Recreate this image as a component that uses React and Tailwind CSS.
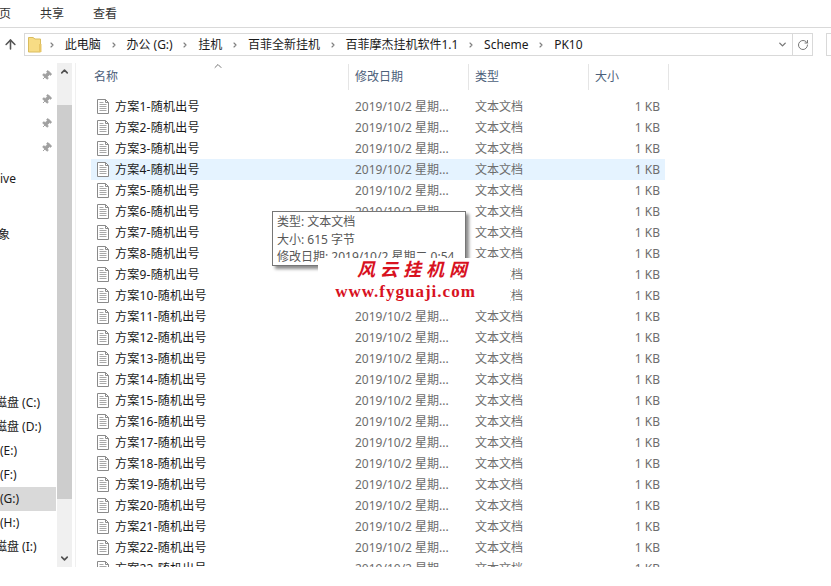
import React from "react";
import { ArrowUp, ChevronDown, ChevronUp, ChevronRight, RotateCw, Pin } from "lucide-react";

const FONT = "font-['Noto_Sans','Noto_Sans_CJK_SC',sans-serif]";

const crumbs = ["此电脑", "办公 (G:)", "挂机", "百菲全新挂机", "百菲摩杰挂机软件1.1", "Scheme", "PK10"];

const files = Array.from({ length: 23 }, (_, i) => `方案${i + 1}-随机出号`);

const drives = [
  { label: "磁盘 (C:)", cut: true },
  { label: "磁盘 (D:)", cut: true },
  { label: "(E:)" },
  { label: "(F:)" },
  { label: "(G:)", active: true },
  { label: "(H:)" },
  { label: "磁盘 (I:)", cut: true },
];

function FileIcon() {
  return (
    <svg width="12" height="15" viewBox="0 0 12 15" fill="none" className="shrink-0">
      <path d="M0.5 0.5H8.5L11.5 3.5V14.5H0.5Z" fill="#fff" stroke="#8a8a8a" />
      <path d="M8.5 0.5V3.5H11.5" stroke="#8a8a8a" />
      <path d="M2.5 3.5H6.5M2.5 5.5H9.5M2.5 7.5H9.5M2.5 9.5H9.5M2.5 11.5H9.5" stroke="#a8a8a8" />
    </svg>
  );
}

function PinRow() {
  return (
    <div className="h-[24px] flex items-center justify-end pr-[4px]">
      <Pin size={11} className="text-[#a0a0a0] rotate-45" fill="#a0a0a0" />
    </div>
  );
}

function HeaderCell({ label, width, pad }) {
  return (
    <div className={`${width} ${pad} h-[26px] flex items-center border-r border-[#e5e5e5] text-[#4c607a]`}>
      {label}
    </div>
  );
}

export default function App() {
  return (
    <div className={`${FONT} relative w-[831px] h-[586px] overflow-hidden bg-white text-[12px] text-[#1a1a1a]`}>
      {/* Ribbon tabs */}
      <div className="h-[28px] flex items-center pt-[1px] border-b border-[#d9d9d9] -ml-[1px] text-[#333]">
        <span className="w-[12px] overflow-hidden flex justify-end">
          <span className="shrink-0">首页</span>
        </span>
        <span className="ml-[29px]">共享</span>
        <span className="ml-[29px]">查看</span>
      </div>

      {/* Address row */}
      <div className="h-[23px] mt-[5px] flex items-center overflow-hidden">
        <div className="w-[20px] mr-[4px] shrink-0 flex justify-center">
          <ArrowUp size={15} strokeWidth={2.5} className="text-[#555]" />
        </div>
        <div className="w-[789px] h-[23px] shrink-0 flex items-center border border-[#d9d9d9]">
          <svg width="14" height="17" viewBox="0 0 14 17" className="ml-[3px] shrink-0">
            <path d="M0.5 1.5H5L7 3H12.5V16H0.5Z" fill="#f7dc85" stroke="#d9bc5e" />
            <path d="M11 8H13.5V16H11Z" fill="#e8c666" />
          </svg>
          <div className="flex items-center ml-[6px] gap-[8.8px]">
            {crumbs.map((c) => (
              <React.Fragment key={c}>
                <ChevronRight size={8} strokeWidth={3.5} className="text-[#808080] shrink-0" />
                <span className="whitespace-nowrap">{c}</span>
              </React.Fragment>
            ))}
          </div>
          <ChevronDown size={11} strokeWidth={3} className="ml-auto mr-[2px] text-[#777]" />
          <div className="ml-[2px] w-[20px] h-full flex items-center justify-center border-l border-[#d9d9d9]">
            <RotateCw size={12} className="text-[#777]" />
          </div>
        </div>
        <div className="ml-[13px] w-[10px] h-[23px] border border-[#d9d9d9] shrink-0" />
      </div>

      {/* Main area */}
      <div className="flex h-[504px] mt-[7px] overflow-hidden">
        {/* Navigation pane */}
        <div className="w-[57px] shrink-0 pr-[1px] overflow-hidden text-[#1a1a1a]">
          <div>
            <PinRow />
            <PinRow />
            <PinRow />
            <PinRow />
          </div>
          <div className="h-[24px] mt-[8px] leading-[24px] whitespace-nowrap">ive</div>
          <div className="h-[24px] mt-[32px] leading-[24px] whitespace-nowrap">
            <span className="block -ml-[2px]">象</span>
          </div>
          <div className="mt-[144px]">
            {drives.map((d) => (
              <div
                key={d.label}
                className={`h-[24px] leading-[24px] whitespace-nowrap overflow-hidden ${d.active ? "bg-[#d9d9d9]" : ""}`}
              >
                <span className={`block ${d.cut ? "-ml-[5px]" : "ml-0"}`}>{d.label}</span>
              </div>
            ))}
          </div>
        </div>

        {/* Scrollbar */}
        <div className="w-[15px] shrink-0 bg-[#f0f0f0] flex flex-col">
          <div className="h-[17px] flex items-center justify-center">
            <ChevronUp size={11} strokeWidth={3.5} className="text-[#505050]" />
          </div>
          <div className="mt-[25px] h-[394px] bg-[#cdcdcd]" />
          <div className="mt-auto h-[17px] flex items-center justify-center">
            <ChevronDown size={11} strokeWidth={3.5} className="text-[#505050]" />
          </div>
        </div>

        {/* File list */}
        <div className="flex-1 min-w-0 ml-[3px] border-l border-[#f0f0f0] overflow-hidden">
          <div className="relative flex h-[26px] mt-[1px]">
            <HeaderCell label="名称" width="w-[273px]" pad="pl-[18px]" />
            <HeaderCell label="修改日期" width="w-[120px]" pad="pl-[6px]" />
            <HeaderCell label="类型" width="w-[120px]" pad="pl-[6px]" />
            <HeaderCell label="大小" width="w-[80px]" pad="pl-[6px]" />
            <ChevronUp size={12} strokeWidth={2} className="absolute left-[136px] -top-[4px] text-[#777]" />
          </div>
          <div className="mt-[6px] ml-[15px] w-[574px]">
            {files.map((name, i) => (
              <div key={name} className={`h-[21px] flex items-center ${i === 3 ? "bg-[#e5f3ff]" : ""}`}>
                <div className="w-[240px] pl-[6px] flex items-center gap-[6px]">
                  <FileIcon />
                  <span className="whitespace-nowrap tracking-[0.25px]">{name}</span>
                </div>
                <span className="w-[120px] pl-[24px] text-[#6d6d6d] whitespace-nowrap">2019/10/2 星期...</span>
                <span className="w-[120px] pl-[24px] text-[#6d6d6d] whitespace-nowrap">文本文档</span>
                <span className="flex-1 text-right pr-[5px] text-[#6d6d6d] whitespace-nowrap">1 KB</span>
              </div>
            ))}
          </div>
        </div>
      </div>

      {/* Tooltip */}
      <div className="absolute left-[272px] top-[211px] w-[194px] h-[55px] bg-white border border-[#767676] shadow-[3px_3px_3px_rgba(0,0,0,0.45)] pl-[4px] pt-[1px] text-[#575757] leading-[17.5px] whitespace-nowrap overflow-hidden">
        <div>类型: 文本文档</div>
        <div>大小: 615 字节</div>
        <div>修改日期: 2019/10/2 星期二 0:54</div>
      </div>

      {/* Watermark */}
      <div className="absolute left-[318px] top-[258px] w-[192px] h-[49px] bg-white flex flex-col items-center">
        <div className="ml-[-4px] flex gap-[5px] text-[18px] leading-[22px] font-bold italic text-[#d8121f]">
          <span>风</span>
          <span>云</span>
          <span>挂</span>
          <span>机</span>
          <span>网</span>
        </div>
        <div className="mt-[3px] ml-[-17px] font-['Liberation_Serif',serif] font-bold text-[17px] leading-[18px] tracking-[1px] text-[#d8121f] whitespace-nowrap">
          www.fyguaji.com
        </div>
      </div>
    </div>
  );
}
